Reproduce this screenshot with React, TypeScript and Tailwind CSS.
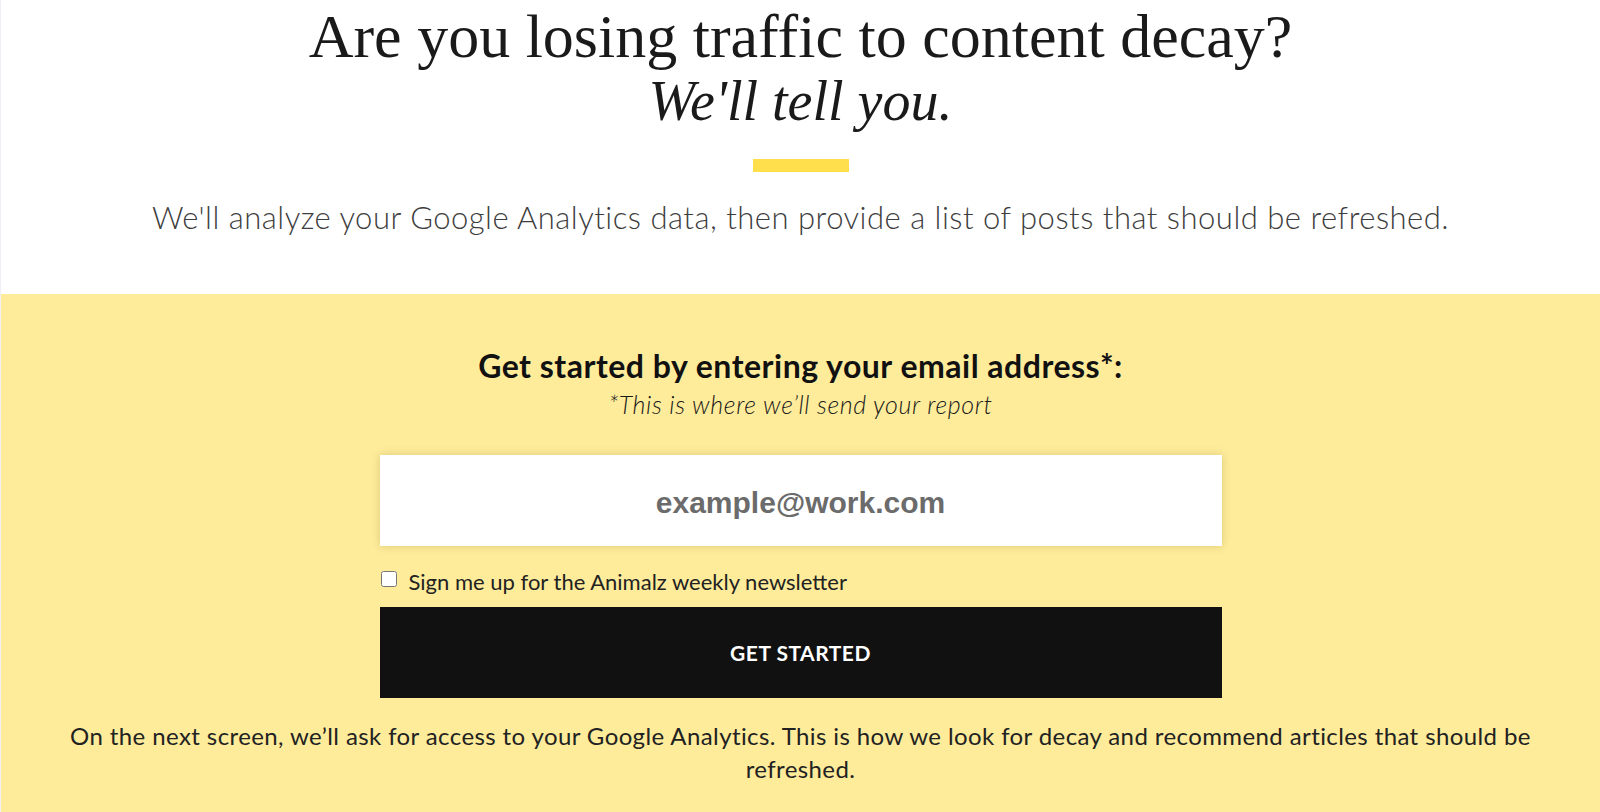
export default function App() {
  return (
    <div className="min-h-screen flex flex-col bg-[#feec9b] border-l border-[#eef0f6]">
      {/* ── Intro ─────────────────────────────────────────────── */}
      <section className="bg-white h-[294px] pt-[3px] flex flex-col items-center">
        <h1 className="font-['Liberation_Serif',serif] text-[#1a1a1a] text-center font-normal">
          <span className="block text-[62px] leading-[66px]">Are you losing traffic to content decay?</span>
          <em className="block italic text-[56px] leading-[66px] -mt-[1px]">We'll tell you.</em>
        </h1>
        <div className="w-[96px] h-[13px] bg-[#ffe04c] mt-[25px]" />
        <p className="font-['Lato',sans-serif] font-light text-[#3d3d3d] text-[31px] tracking-[0.5px] leading-[36px] mt-[27px] text-center">
          We'll analyze your Google Analytics data, then provide a list of posts that should be refreshed.
        </p>
      </section>

      {/* ── Email form ────────────────────────────────────────── */}
      <section className="flex-1 flex flex-col items-center pt-[54px] font-['Lato',sans-serif] text-[#1a1a1a]">
        <h2 className="text-[32px] tracking-[0.5px] leading-[36px] font-bold text-[#111]">
          Get started by entering your email address*:
        </h2>
        <p className="italic font-light text-[25px] tracking-[0.6px] leading-[28px] mt-[6px]">
          *This is where we’ll send your report
        </p>

        <div className="w-[842px] mt-[37px] flex flex-col">
          <input
            type="email"
            placeholder="example@work.com"
            className="h-[91px] w-full pt-[5px] bg-white text-center font-['Liberation_Sans',sans-serif] font-bold text-[30px] text-[#555] placeholder:text-[#6b6b6b] shadow-[0_0_8px_rgba(120,100,20,0.25)] outline-none"
          />
          <label className="flex items-center gap-[12px] mt-[21px] h-[28px] text-[22px] font-normal text-[#222]">
            <input type="checkbox" className="w-[16px] h-[16px] ml-[1px] -mt-[4px]" />
            Sign me up for the Animalz weekly newsletter
          </label>
          <button className="h-[91px] mt-[12px] bg-[#111111] text-white font-bold text-[21px] tracking-[0.5px] uppercase">
            Get started
          </button>
        </div>

        <p className="max-w-[1500px] text-center text-[24px] tracking-[0.4px] leading-[33px] font-normal text-[#222] mt-[21px]">
          On the next screen, we’ll ask for access to your Google Analytics. This is how we look for decay and recommend articles that should be refreshed.
        </p>
      </section>
    </div>
  );
}
